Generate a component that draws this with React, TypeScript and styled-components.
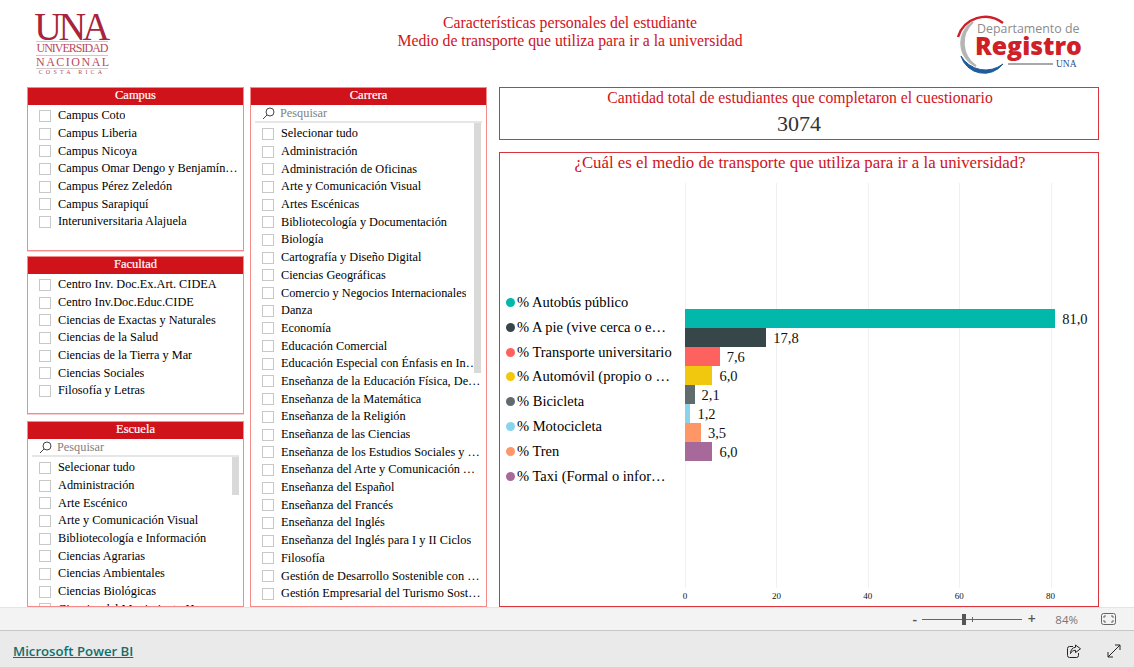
import React from 'react';
import styled, { createGlobalStyle } from 'styled-components';

const GlobalStyle = createGlobalStyle`
    html, body {
        margin: 0;
        padding: 0;
        background: #ffffff;
        font-family: 'Liberation Serif', 'Times New Roman', serif;
    }
`;

const campus = [
    'Campus Coto',
    'Campus Liberia',
    'Campus Nicoya',
    'Campus Omar Dengo y Benjamín Núñez',
    'Campus Pérez Zeledón',
    'Campus Sarapiquí',
    'Interuniversitaria Alajuela',
];

const facultad = [
    'Centro Inv. Doc.Ex.Art. CIDEA',
    'Centro Inv.Doc.Educ.CIDE',
    'Ciencias de Exactas y Naturales',
    'Ciencias de la Salud',
    'Ciencias de la Tierra y Mar',
    'Ciencias Sociales',
    'Filosofía y Letras',
];

const escuela = [
    'Selecionar tudo',
    'Administración',
    'Arte Escénico',
    'Arte y Comunicación Visual',
    'Bibliotecología e Información',
    'Ciencias Agrarias',
    'Ciencias Ambientales',
    'Ciencias Biológicas',
    'Ciencias del Movimiento Humano',
];

const carrera = [
    'Selecionar tudo',
    'Administración',
    'Administración de Oficinas',
    'Arte y Comunicación Visual',
    'Artes Escénicas',
    'Bibliotecología y Documentación',
    'Biología',
    'Cartografía y Diseño Digital',
    'Ciencias Geográficas',
    'Comercio y Negocios Internacionales',
    'Danza',
    'Economía',
    'Educación Comercial',
    'Educación Especial con Énfasis en Integración',
    'Enseñanza de la Educación Física, Deporte',
    'Enseñanza de la Matemática',
    'Enseñanza de la Religión',
    'Enseñanza de las Ciencias',
    'Enseñanza de los Estudios Sociales y Cívica',
    'Enseñanza del Arte y Comunicación Visual',
    'Enseñanza del Español',
    'Enseñanza del Francés',
    'Enseñanza del Inglés',
    'Enseñanza del Inglés para I y II Ciclos',
    'Filosofía',
    'Gestión de Desarrollo Sostenible con Énfasis',
    'Gestión Empresarial del Turismo Sostenible',
];

const transport = [
    { label: '% Autobús público', value: 81, text: '81,0', color: '#01b8aa' },
    { label: '% A pie (vive cerca o en la universidad)', value: 17.8, text: '17,8', color: '#374649' },
    { label: '% Transporte universitario', value: 7.6, text: '7,6', color: '#fd625e' },
    { label: '% Automóvil (propio o compartido)', value: 6, text: '6,0', color: '#f2c80f' },
    { label: '% Bicicleta', value: 2.1, text: '2,1', color: '#5f6b6d' },
    { label: '% Motocicleta', value: 1.2, text: '1,2', color: '#8ad4eb' },
    { label: '% Tren', value: 3.5, text: '3,5', color: '#fe9666' },
    { label: '% Taxi (Formal o informal)', value: 6, text: '6,0', color: '#a66999' },
];

const ticks = [0, 20, 40, 60, 80];
const PX_PER_UNIT = 4.57;

const Page = styled.div`
    width: 1134px;
    height: 667px;
    display: flex;
    flex-direction: column;
    overflow: hidden;
`;

const Report = styled.div`
    height: 607px;
    display: flex;
    flex-direction: column;
`;

const Header = styled.header`
    height: 87px;
    display: grid;
    grid-template-columns: 250px 1fr 250px;
    align-items: start;
`;

const UnaLogo = styled.div`
    margin: 12px 0 0 36px;
    width: 72px;
    color: #a8243c;
    text-align: center;
`;

const UnaMark = styled.div`
    font-size: 39px;
    line-height: 29px;
    letter-spacing: -3.5px;
    margin-left: -3px;
    height: 29px;
    white-space: nowrap;
    transform: scaleX(0.98);
`;

const UnaLine = styled.div<{ $size: number; $spacing: number }>`
    font-size: ${(p) => p.$size}px;
    letter-spacing: ${(p) => p.$spacing}px;
    line-height: ${(p) => p.$size - 0.5}px;
    white-space: nowrap;
    color: #b84a5e;
    border-top: 1px solid #cfc8c9;
    padding-top: 1px;
`;

const Titles = styled.div`
    padding-top: 14px;
    text-align: center;
    color: #d0121b;
    font-size: 15.75px;
    line-height: 18px;
    margin-left: 6px;
`;

const RegistroBox = styled.div`
    justify-self: end;
    margin: 12px 50px 0 0;
`;

const Body = styled.div`
    flex: 1;
    display: flex;
    padding-left: 27px;
    min-height: 0;
`;

const SlicerColumn = styled.div`
    width: 217px;
    margin-right: 6px;
    display: flex;
    flex-direction: column;
`;

const Slicer = styled.section<{ $h: number; $w?: number; $mb?: number }>`
    box-sizing: border-box;
    height: ${(p) => p.$h}px;
    width: ${(p) => p.$w ?? 217}px;
    margin-bottom: ${(p) => p.$mb ?? 0}px;
    border: 1px solid #f58a8a;
    box-shadow: 0 1px 0 #fbd0d0;
    display: flex;
    flex-direction: column;
    overflow: hidden;
    flex-shrink: 0;
`;

const SlicerTitle = styled.div`
    height: 17px;
    flex-shrink: 0;
    background: #d0121b;
    color: #ffffff;
    font-size: 12.5px;
    font-weight: 400;
    -webkit-text-stroke: 0.2px #ffffff;
    line-height: 15px;
    text-align: center;
`;

const SearchRow = styled.div`
    height: 18px;
    flex-shrink: 0;
    box-sizing: border-box;
    margin: 0 4px;
    padding: 1px 0 0 7px;
    display: flex;
    align-items: center;
    gap: 5px;
    color: #7f7f7f;
    font-size: 12.3px;
    border-bottom: 2px solid #e6e6e6;
`;

const ListArea = styled.div`
    position: relative;
    flex: 1;
    min-height: 0;
    overflow: hidden;
`;

const Rows = styled.ul<{ $top: number; $right: number }>`
    list-style: none;
    margin: 0;
    padding: ${(p) => p.$top}px ${(p) => p.$right}px 0 11px;
`;

const Row = styled.li`
    height: 17.7px;
    display: flex;
    align-items: center;
    gap: 7px;
    font-size: 12.3px;
    color: #000000;
    white-space: nowrap;
`;

const Check = styled.span`
    box-sizing: border-box;
    flex-shrink: 0;
    width: 12px;
    height: 12px;
    border: 1px solid #c8c8c8;
`;

const RowText = styled.span`
    overflow: hidden;
    text-overflow: ellipsis;
`;

const ScrollThumb = styled.div<{ $h: number; $right: number }>`
    position: absolute;
    top: 0;
    right: ${(p) => p.$right}px;
    width: 7px;
    height: ${(p) => p.$h}px;
    background: #d9d9d9;
`;

const RightColumn = styled.div`
    width: 600px;
    margin-left: 12px;
    display: flex;
    flex-direction: column;
    gap: 12px;
`;

const KpiCard = styled.section`
    box-sizing: border-box;
    height: 53px;
    border: 1px solid #d9343c;
    text-align: center;
`;

const KpiLabel = styled.div`
    color: #d0121b;
    font-size: 15.7px;
    line-height: 18px;
    padding-top: 1px;
    margin-left: 2px;
`;

const KpiValue = styled.div`
    color: #333333;
    font-size: 22px;
    line-height: 26px;
    margin-top: 4px;
`;

const ChartCard = styled.section`
    box-sizing: border-box;
    height: 455px;
    border: 1px solid #d9343c;
    display: flex;
    flex-direction: column;
`;

const ChartTitle = styled.div`
    color: #d0121b;
    font-size: 16.8px;
    line-height: 20px;
    text-align: center;
    height: 29px;
    flex-shrink: 0;
    margin-left: 2px;
`;

const ChartBody = styled.div`
    flex: 1;
    display: flex;
    min-height: 0;
`;

const Legend = styled.ul`
    list-style: none;
    width: 185px;
    margin: 0;
    padding: 108px 0 0 6px;
    flex-shrink: 0;
    box-sizing: border-box;
`;

const LegendItem = styled.li`
    height: 24.85px;
    display: flex;
    align-items: center;
    gap: 2px;
    font-size: 14.5px;
    white-space: nowrap;
`;

const Dot = styled.span<{ $c: string }>`
    width: 9px;
    height: 9px;
    border-radius: 50%;
    flex-shrink: 0;
    background: ${(p) => p.$c};
`;

const LegendText = styled.span`
    overflow: hidden;
    text-overflow: ellipsis;
    width: 156px;
`;

const Plot = styled.div`
    position: relative;
    flex: 1;
    padding-top: 127px;
`;

const GridLine = styled.div`
    position: absolute;
    top: 1px;
    bottom: 18px;
    width: 1px;
    background: #f0f0f0;
`;

const TickLabel = styled.div`
    position: absolute;
    bottom: 4px;
    width: 20px;
    margin-left: -10px;
    text-align: center;
    font-size: 9px;
    line-height: 11px;
    color: #111111;
`;

const BarRow = styled.div`
    position: relative;
    height: 19px;
    display: flex;
    align-items: center;
    gap: 7px;
`;

const Bar = styled.div<{ $c: string }>`
    height: 19px;
    background: ${(p) => p.$c};
    flex-shrink: 0;
`;

const BarValue = styled.span`
    font-size: 14.5px;
    line-height: 19px;
    padding-top: 1px;
    color: #111111;
`;

const ZoomBar = styled.div`
    height: 24px;
    box-sizing: border-box;
    background: #f3f3f3;
    border-top: 1px solid #e4e4e4;
    border-bottom: 1px solid #c8c8c8;
    display: flex;
    align-items: center;
    justify-content: flex-end;
    padding-right: 18px;
    font-family: 'Open Sans', sans-serif;
    color: #666666;
`;

const ZoomSign = styled.span`
    font-size: 14px;
    font-weight: 600;
    line-height: 14px;
    width: 9px;
    text-align: center;
    color: #555555;
`;

const ZoomTrack = styled.div`
    position: relative;
    width: 100px;
    height: 1px;
    margin: 0 5px 0 3px;
    background: #666666;
`;

const ZoomTick = styled.span`
    position: absolute;
    left: 50px;
    top: -2px;
    width: 1px;
    height: 5px;
    background: #666666;
`;

const ZoomThumb = styled.span`
    position: absolute;
    left: 40px;
    top: -5px;
    width: 4px;
    height: 11px;
    background: #555555;
`;

const ZoomPercent = styled.span`
    font-size: 11.5px;
    margin: 0 23px 0 19px;
    color: #777777;
`;

const Footer = styled.footer`
    flex: 1;
    background: #eaeaea;
    display: flex;
    align-items: center;
    justify-content: space-between;
    padding: 3px 13px 0;
`;

const BrandLink = styled.a`
    font-family: 'Open Sans', sans-serif;
    font-size: 13.2px;
    font-weight: 600;
    color: #0f6f6c;
    text-decoration: underline;
`;

const FooterIcons = styled.div`
    display: flex;
    gap: 26px;
    align-items: center;
`;

function SlicerList({ items, thumb, thumbRight = 5 }: {
    items: string[];
    thumb?: number;
    thumbRight?: number;
}) {
    return (
        <ListArea>
            <Rows $top={2} $right={5}>
                {items.map((item) => (
                    <Row key={item}>
                        <Check />
                        <RowText>{item}</RowText>
                    </Row>
                ))}
            </Rows>
            {thumb && <ScrollThumb $h={thumb} $right={thumbRight} />}
        </ListArea>
    );
}

function SearchBox() {
    return (
        <SearchRow>
            <svg width="13" height="13" viewBox="0 0 13 13" fill="none" stroke="#444444" strokeWidth="1">
                <circle cx="8" cy="5" r="4" />
                <path d="M5 8L1 12" />
            </svg>
            Pesquisar
        </SearchRow>
    );
}

function RegistroLogo() {
    return (
        <svg width="128" height="62" viewBox="0 0 128 62">
            <path d="M 2 25 A 28.5 28.5 0 0 1 47 11" fill="none" stroke="#cf2027" strokeWidth="2.5" />
            <path d="M 17 10 A 25 25 0 0 0 20 54 A 28 28 0 0 1 17 10 Z" fill="#b5b5b5" stroke="#b5b5b5" strokeWidth="2" />
            <path d="M 5 44 A 28.5 28.5 0 0 0 47 52 A 24 24 0 0 1 5 44 Z" fill="#1f5c9e" stroke="#1f5c9e" strokeWidth="1" />
            <text x="21" y="21" fontFamily="Open Sans, sans-serif" fontSize="12.4" fill="#8c8c8c">
                Departamento de
            </text>
            <text x="19" y="43" fontFamily="Open Sans, sans-serif" fontSize="24.8" fontWeight="800" fill="#cf2027">
                Registro
            </text>
            <rect x="52" y="51" width="45" height="2" fill="#a8a8a8" />
            <text x="100" y="55" fontFamily="Liberation Serif, serif" fontSize="9.5" fill="#1f4e8c">
                UNA
            </text>
        </svg>
    );
}

export default function App() {
    return (
        <Page>
            <GlobalStyle />
            <Report>
                <Header>
                    <UnaLogo>
                        <UnaMark>UNA</UnaMark>
                        <UnaLine $size={12} $spacing={-1}>UNIVERSIDAD</UnaLine>
                        <UnaLine $size={12} $spacing={1.5}>NACIONAL</UnaLine>
                        <UnaLine $size={6} $spacing={3.2}>COSTA RICA</UnaLine>
                    </UnaLogo>
                    <Titles>
                        Características personales del estudiante
                        <br />
                        Medio de transporte que utiliza para ir a la universidad
                    </Titles>
                    <RegistroBox>
                        <RegistroLogo />
                    </RegistroBox>
                </Header>
                <Body>
                    <SlicerColumn>
                        <Slicer $h={164} $mb={5}>
                            <SlicerTitle>Campus</SlicerTitle>
                            <SlicerList items={campus} />
                        </Slicer>
                        <Slicer $h={158} $mb={7}>
                            <SlicerTitle>Facultad</SlicerTitle>
                            <SlicerList items={facultad} />
                        </Slicer>
                        <Slicer $h={186}>
                            <SlicerTitle>Escuela</SlicerTitle>
                            <SearchBox />
                            <SlicerList items={escuela} thumb={38} thumbRight={4} />
                        </Slicer>
                    </SlicerColumn>
                    <Slicer $h={520} $w={237}>
                        <SlicerTitle>Carrera</SlicerTitle>
                        <SearchBox />
                        <SlicerList items={carrera} thumb={250} />
                    </Slicer>
                    <RightColumn>
                        <KpiCard>
                            <KpiLabel>Cantidad total de estudiantes que completaron el cuestionario</KpiLabel>
                            <KpiValue>3074</KpiValue>
                        </KpiCard>
                        <ChartCard>
                            <ChartTitle>¿Cuál es el medio de transporte que utiliza para ir a la universidad?</ChartTitle>
                            <ChartBody>
                                <Legend>
                                    {transport.map((t) => (
                                        <LegendItem key={t.label}>
                                            <Dot $c={t.color} />
                                            <LegendText>{t.label}</LegendText>
                                        </LegendItem>
                                    ))}
                                </Legend>
                                <Plot>
                                    {ticks.map((tick) => (
                                        <React.Fragment key={tick}>
                                            <GridLine style={{ left: tick * PX_PER_UNIT }} />
                                            <TickLabel style={{ left: tick * PX_PER_UNIT }}>{tick}</TickLabel>
                                        </React.Fragment>
                                    ))}
                                    {transport.map((t) => (
                                        <BarRow key={t.label}>
                                            <Bar $c={t.color} style={{ width: t.value * PX_PER_UNIT }} />
                                            <BarValue>{t.text}</BarValue>
                                        </BarRow>
                                    ))}
                                </Plot>
                            </ChartBody>
                        </ChartCard>
                    </RightColumn>
                </Body>
            </Report>
            <ZoomBar>
                <ZoomSign>-</ZoomSign>
                <ZoomTrack>
                    <ZoomThumb />
                    <ZoomTick />
                </ZoomTrack>
                <ZoomSign>+</ZoomSign>
                <ZoomPercent>84%</ZoomPercent>
                <svg width="15" height="12" viewBox="0 0 15 12" fill="none" stroke="#666666">
                    <rect x="0.5" y="0.5" width="14" height="11" rx="2" />
                    <path d="M3 5V3h2M10 3h2v2M12 7v2h-2M5 9H3V7" />
                </svg>
            </ZoomBar>
            <Footer>
                <BrandLink>Microsoft Power BI</BrandLink>
                <FooterIcons>
                    <svg width="14" height="14" viewBox="0 0 14 14" fill="none" stroke="#252423">
                        <path d="M6 2.5H2.5a2 2 0 0 0-2 2v7a2 2 0 0 0 2 2h7a2 2 0 0 0 2-2V9" />
                        <path d="M8.5 1l5 3.8-5 3.8V6.3C6 6.3 4.5 7.5 3.5 9.5 3.5 6 5.5 3.5 8.5 3.3z" />
                    </svg>
                    <svg width="14" height="14" viewBox="0 0 14 14" fill="none" stroke="#252423">
                        <path d="M1 13L13 1M8 1h5v5M1 8v5h5" />
                    </svg>
                </FooterIcons>
            </Footer>
        </Page>
    );
}
